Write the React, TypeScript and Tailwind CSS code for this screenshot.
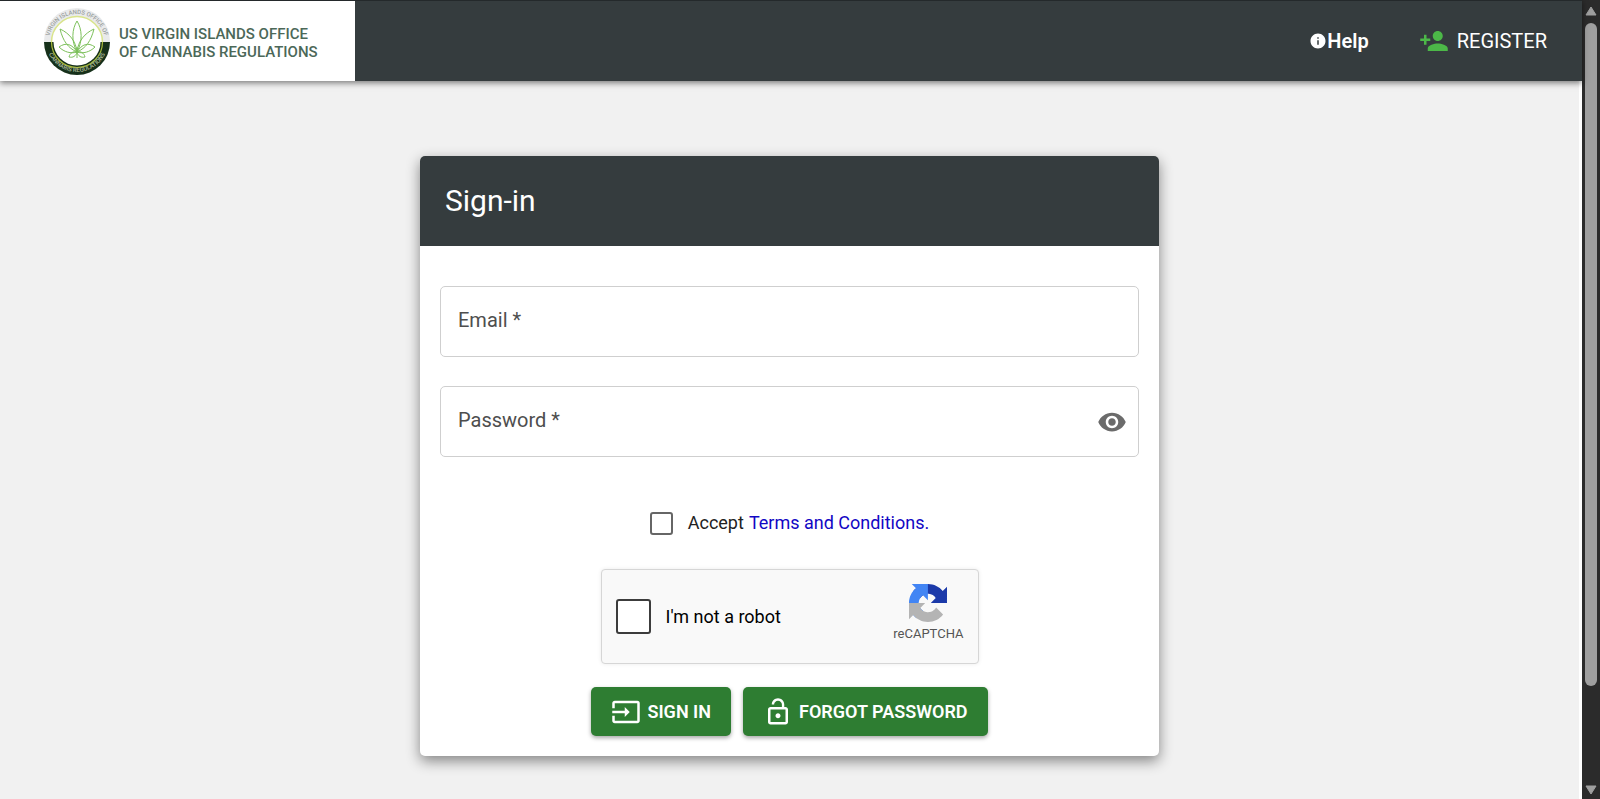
import { useState } from 'react';
import { MdInfo, MdInput, MdLockOpen, MdPersonAdd, MdVisibility } from 'react-icons/md';

const Seal = () => (
  <svg className="w-[68px] h-[68px] shrink-0" viewBox="-34 -34 68 68" aria-hidden="true">
    <defs>
      <path id="seal-top" d="M-28 1A28 28 0 0 1 28 1" />
      <path id="seal-bottom" d="M-31 0A31 31 0 0 0 31 0" />
    </defs>
    <circle r="33" fill="#e9eaeb" />
    <path d="M-33 1H33A33 33 0 0 1-33 1Z" fill="#16301a" />
    <path d="M-26 1A26 26 0 0 1 26 1" fill="#fff" />
    <path d="M-23.500 1A23.500 23.500 0 0 0 23.500 1Z" fill="#fff" />
    <path d="M-25.500 1A25.500 25.500 0 0 1 25.500 1" fill="none" stroke="#d9e48c" strokeWidth="1.500" />
    <path d="M-25.500 1A25.500 25.500 0 0 0 25.500 1" fill="none" stroke="#a9bb3c" strokeWidth="1.200" />
    <text fontFamily="Roboto" fontSize="6" fill="#9aa09e">
      <textPath href="#seal-top" startOffset="50%" textAnchor="middle">VIRGIN ISLANDS OFFICE OF</textPath>
    </text>
    <text fontFamily="Roboto" fontSize="6" fill="#aebd9a">
      <textPath href="#seal-bottom" startOffset="50%" textAnchor="middle">CANNABIS REGULATIONS</textPath>
    </text>
    <g fill="none" stroke="#7cc05a" strokeWidth="1" strokeLinejoin="round">
      <path d="M0 11C-6 0-5-12 0-20C5-12 6 0 0 11Z" />
      <path d="M0 11C-9 7-14 0-17-12C-8-8-1 0 0 11Z" />
      <path d="M0 11C9 7 14 0 17-12C8-8 1 0 0 11Z" />
      <path d="M0 11C-5 3-11 1-18 6C-13 11-6 13 0 11Z" />
      <path d="M0 11C5 3 11 1 18 6C13 11 6 13 0 11Z" />
      <path d="M0 11C-4 10-7 12-8 16C-4 17-1 15 0 11Z" />
      <path d="M0 11C4 10 7 12 8 16C4 17 1 15 0 11Z" />
      <path d="M0 6V17" />
    </g>
  </svg>
);

const RecaptchaLogo = () => (
  <svg className="w-[38px] h-[38px]" viewBox="0 0 64 64" aria-hidden="true">
    <path fill="#1c3aa9" d="M64 31.955l-.033-1.37V4.687l-7.16 7.16C50.948 4.674 42.033.093 32.05.093c-10.4 0-19.622 4.96-25.458 12.64l11.736 11.86a15.55 15.55 0 0 1 4.754-5.334c2.05-1.6 4.952-2.906 8.968-2.906.485 0 .86.057 1.135.163 4.976.393 9.288 3.14 11.828 7.124l-8.307 8.307L64 31.953" />
    <path fill="#4285f4" d="M31.862.094l-1.37.033H4.594l7.16 7.16C4.58 13.147 0 22.06 0 32.046c0 10.4 4.96 19.622 12.64 25.458L24.5 45.768a15.55 15.55 0 0 1-5.334-4.754c-1.6-2.05-2.906-4.952-2.906-8.968 0-.485.057-.86.163-1.135.393-4.976 3.14-9.288 7.124-11.828l8.307 8.307L31.86.095" />
    <path fill="#b4b4b4" d="M.001 32.045l.033 1.37v25.898l7.16-7.16c5.86 7.173 14.774 11.754 24.76 11.754 10.4 0 19.622-4.96 25.458-12.64l-11.736-11.86a15.55 15.55 0 0 1-4.754 5.334c-2.05 1.6-4.952 2.906-8.968 2.906-.485 0-.86-.057-1.135-.163-4.976-.393-9.288-3.14-11.828-7.124l8.307-8.307c-10.522.04-22.4.066-27.295-.005" />
  </svg>
);

const Header = () => (
  <header className="relative flex items-stretch justify-between bg-[#353c3e] border-t border-[#24292b] text-white shadow-[0_2px_6px_rgba(0,0,0,0.5)]">
    <a href="#" className="flex items-center gap-2 bg-white pl-[43px] pr-[37px] py-[6px] text-[15px] leading-[18px] font-medium text-[#4c6858]">
      <Seal />
      <span className="pt-1">US VIRGIN ISLANDS OFFICE<br />OF CANNABIS REGULATIONS</span>
    </a>
    <nav className="flex items-center gap-[50px] pr-[35px] text-xl">
      <a href="#" className="flex items-center font-semibold">
        <MdInfo className="w-[18px] h-[18px]" />
        Help
      </a>
      <a href="#" className="flex items-center gap-2">
        <MdPersonAdd className="w-[30px] h-[30px] text-[#4cb848]" />
        REGISTER
      </a>
    </nav>
  </header>
);

const Scrollbar = () => (
  <div className="flex w-[18px] shrink-0 flex-col items-center bg-[#2b2b2b] pt-[6px] pb-1" aria-hidden="true">
    <svg className="w-3 h-[10px] shrink-0" viewBox="0 0 12 10"><path d="M6 1L11 9H1Z" fill="#9f9f9f" stroke="#9f9f9f" strokeLinejoin="round" /></svg>
    <div className="mt-[7px] h-[84%] w-3 rounded-full bg-[#9f9f9f]" />
    <svg className="mt-auto w-3 h-[10px] shrink-0" viewBox="0 0 12 10"><path d="M6 9L11 1H1Z" fill="#9f9f9f" stroke="#9f9f9f" strokeLinejoin="round" /></svg>
  </div>
);

const App = () => {
  const [email, setEmail] = useState('');
  const [password, setPassword] = useState('');
  const [showPassword, setShowPassword] = useState(false);

  return (
    <div className="flex h-screen overflow-hidden font-['Roboto',sans-serif]">
      <div className="flex min-w-0 flex-1 flex-col">
        <Header />
        <main className="flex flex-1 items-start justify-center border-r-[3px] border-white bg-[#f1f1f1] px-4 pt-[75px]">
          <section className="w-full max-w-[739px] overflow-hidden rounded-[5px] bg-white shadow-[0_5px_14px_rgba(0,0,0,0.45)]">
            <h1 className="bg-[#353c3e] px-[25px] py-[25px] text-3xl leading-10 text-white">Sign-in</h1>
            <form className="px-5 pt-10 pb-5" onSubmit={(e) => e.preventDefault()}>
              <div className="relative">
                <input
                  id="email"
                  type="email"
                  className="peer block h-[71px] w-full rounded-[5px] border border-[#cfcfcf] px-4 text-xl"
                  value={email}
                  onChange={(e) => setEmail(e.target.value)}
                  placeholder=" "
                />
                <label htmlFor="email" className="pointer-events-none absolute inset-y-0 left-[18px] hidden items-center pb-1 text-xl text-[#4e4e4e] peer-placeholder-shown:flex">
                  Email *
                </label>
              </div>
              <div className="relative mt-[29px]">
                <input
                  id="password"
                  type={showPassword ? 'text' : 'password'}
                  className="peer block h-[71px] w-full rounded-[5px] border border-[#cfcfcf] pl-4 pr-14 text-xl"
                  value={password}
                  onChange={(e) => setPassword(e.target.value)}
                  placeholder=" "
                />
                <label htmlFor="password" className="pointer-events-none absolute inset-y-0 left-[18px] hidden items-center pb-1 text-xl text-[#4e4e4e] peer-placeholder-shown:flex">
                  Password *
                </label>
                <button
                  type="button"
                  aria-label="Show password"
                  className="absolute inset-y-0 right-3 text-[#6b6b6b]"
                  onClick={() => setShowPassword(!showPassword)}
                >
                  <MdVisibility className="w-[30px] h-[30px]" />
                </button>
              </div>
              <div className="mt-[54px] flex items-center justify-center">
                <input id="terms" type="checkbox" className="mr-[15px] h-[23px] w-[23px] appearance-none rounded-[3px] border-2 border-[#666] checked:bg-[#2e7d32]" />
                <label htmlFor="terms" className="mr-[5px] text-lg leading-6 text-[#222]">Accept</label>
                <a href="#" className="text-lg leading-6 text-[#1207c4]">Terms and Conditions.</a>
              </div>
              <div className="mx-auto mt-[34px] flex h-[95px] w-full max-w-[378px] items-center rounded-[4px] border border-[#d6d6d6] bg-[#f9f9f9] px-[14px] shadow-[0_0_4px_rgba(0,0,0,0.08)]">
                <input id="robot" type="checkbox" className="mr-[15px] h-[35px] w-[35px] appearance-none rounded-[3px] border-2 border-[#3c3c3c] bg-white checked:bg-[#2e7d32]" />
                <label htmlFor="robot" className="text-lg text-black">I'm not a robot</label>
                <div className="ml-auto flex flex-col items-center pb-2">
                  <RecaptchaLogo />
                  <span className="mt-1 text-[13px] leading-4 text-[#555]">reCAPTCHA</span>
                </div>
              </div>
              <div className="mt-[23px] flex justify-center gap-3 text-lg font-semibold text-white">
                <button type="submit" className="flex h-[49px] items-center gap-[6px] rounded-[5px] bg-[#2e7d32] px-5 shadow-[0_2px_4px_rgba(0,0,0,0.35)]">
                  <MdInput className="w-[30px] h-[30px]" />
                  SIGN IN
                </button>
                <button type="button" className="flex h-[49px] items-center gap-[6px] rounded-[5px] bg-[#2e7d32] px-5 shadow-[0_2px_4px_rgba(0,0,0,0.35)]">
                  <MdLockOpen className="w-[30px] h-[30px]" />
                  FORGOT PASSWORD
                </button>
              </div>
            </form>
          </section>
        </main>
      </div>
      <Scrollbar />
    </div>
  );
};

export default App;
